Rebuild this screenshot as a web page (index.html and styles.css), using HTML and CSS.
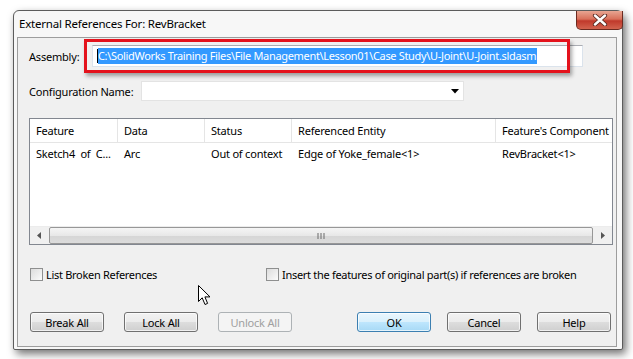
FILE: index.html
```html
<!DOCTYPE html>
<html>
    <head>
        <link rel="stylesheet" href="styles.css">
        <title>External References For: RevBracket</title>
    </head>
    <body>
        <div class="window">
            <div class="titlebar">
                <span class="title">External References For: RevBracket</span>
                <div class="close">
                    <svg width="16" height="12" viewBox="0 0 16 12">
                        <path d="M3 1.5 L13 10.5 M13 1.5 L3 10.5" stroke="#5a2a22" stroke-width="4.2" stroke-linecap="round"/>
                        <path d="M3 1.5 L13 10.5 M13 1.5 L3 10.5" stroke="#ffffff" stroke-width="2.4" stroke-linecap="round"/>
                    </svg>
                </div>
            </div>
            <div class="panel">
                <div class="row assembly">
                    <span class="label">Assembly:</span>
                    <div class="field"><span class="caret"></span><span class="selected">C:\SolidWorks Training Files\File Management\Lesson01\Case Study\U-Joint\U-Joint.sldasm</span></div>
                </div>
                <div class="row config">
                    <span class="label">Configuration Name:</span>
                    <div class="combo">
                        <svg width="8" height="5" viewBox="0 0 8 5"><path d="M0 0 L8 0 L4 4.5 Z" fill="#000"/></svg>
                    </div>
                </div>
                <div class="grid">
                    <div class="grid-line grid-head">
                        <div class="cell">Feature</div>
                        <div class="cell">Data</div>
                        <div class="cell">Status</div>
                        <div class="cell">Referenced Entity</div>
                        <div class="cell">Feature's Component</div>
                    </div>
                    <div class="grid-line grid-row">
                        <div class="cell">Sketch4&nbsp; of&nbsp; C...</div>
                        <div class="cell">Arc</div>
                        <div class="cell">Out of context</div>
                        <div class="cell">Edge of Yoke_female&lt;1&gt;</div>
                        <div class="cell">RevBracket&lt;1&gt;</div>
                    </div>
                    <div class="grid-body"></div>
                    <div class="hscroll">
                        <div class="arrow">
                            <svg width="4" height="7" viewBox="0 0 4 7"><path d="M4 0 L0 3.5 L4 7 Z" fill="#555"/></svg>
                        </div>
                        <div class="thumb">
                            <svg width="8" height="6" viewBox="0 0 8 6"><path d="M1 0 V6 M4 0 V6 M7 0 V6" stroke="#6a6a6a" stroke-width="1"/></svg>
                        </div>
                        <div class="arrow">
                            <svg width="4" height="7" viewBox="0 0 4 7"><path d="M0 0 L4 3.5 L0 7 Z" fill="#555"/></svg>
                        </div>
                    </div>
                </div>
                <div class="checks">
                    <label class="check first"><span class="box"></span>List Broken References</label>
                    <label class="check"><span class="box"></span>Insert the features of original part(s) if references are broken</label>
                </div>
                <div class="buttons">
                    <div class="group left">
                        <button>Break All</button>
                        <button>Lock All</button>
                        <button disabled>Unlock All</button>
                    </div>
                    <div class="group right">
                        <button class="default">OK</button>
                        <button>Cancel</button>
                        <button>Help</button>
                    </div>
                </div>
            </div>
        </div>

        <div class="callout"></div>

        <svg class="pointer" width="14" height="21" viewBox="0 0 14 21">
            <path d="M0.5 0.5 L0.5 16.5 L4.2 12.8 L7 19.5 L9.6 18.4 L6.9 11.9 L12 11.9 Z" fill="#ffffff" stroke="#000" stroke-width="1" stroke-linejoin="round"/>
        </svg>
    </body>
</html>
```

FILE: styles.css
```css
body {
    margin: 0;
    background-color: #ffffff;
    font-family: "Noto Sans", sans-serif;
    font-size: 11px;
    letter-spacing: -0.2px;
    color: #000000;
    width: 633px;
    height: 359px;
    overflow: hidden;
    position: relative;
}
.window {
    margin: 10px 0 0 13px;
    width: 608px;
    height: 338px;
    border: 1px solid #5c5c5c;
    border-radius: 6px 6px 2px 2px;
    background-color: #f7f7f7;
    box-shadow: 3px 4px 9px rgba(0, 0, 0, 0.55);
    display: flex;
    flex-direction: column;
}
.titlebar {
    height: 26px;
    display: flex;
    align-items: flex-start;
    padding-left: 5px;
}
.title {
    font-size: 11.5px;
    margin-top: 5px;
    letter-spacing: -0.2px;
}
.close {
    margin-left: auto;
    margin-right: -1px;
    width: 47px;
    height: 19px;
    border: 1px solid #6b2a20;
    border-top: none;
    border-radius: 0 0 5px 5px;
    background: linear-gradient(to bottom, #e8a592 0%, #d8705a 45%, #c0392b 55%, #d2634e 100%);
    display: flex;
    align-items: center;
    justify-content: center;
    box-sizing: border-box;
}
.panel {
    flex: 1;
    margin: 0 5px 2px 3px;
    border: 1px solid #9d9d9d;
    background-color: #f0f0f0;
    display: flex;
    flex-direction: column;
}
.row {
    display: flex;
    align-items: center;
    padding-left: 11px;
}
.label {
    flex: none;
}
.assembly {
    margin-top: 7px;
    height: 22px;
}
.assembly .label {
    width: 63px;
}
.field {
    width: 491px;
    height: 22px;
    box-sizing: border-box;
    border: 1px solid #dbe3ec;
    border-top-color: #abadb3;
    background-color: #ffffff;
    display: flex;
    align-items: center;
    padding-left: 4px;
}
.caret {
    width: 1px;
    height: 14px;
    background-color: #000;
}
.selected {
    background-color: #3399ff;
    color: #ffffff;
    line-height: 16px;
    padding-right: 1px;
    letter-spacing: -0.33px;
    white-space: nowrap;
}
.config {
    margin-top: 14px;
    height: 20px;
}
.config .label {
    width: 112px;
}
.combo {
    width: 323px;
    height: 20px;
    box-sizing: border-box;
    border: 1px solid #e3e3e3;
    background-color: #ffffff;
    display: flex;
    align-items: center;
    justify-content: flex-end;
    padding-right: 4px;
}
.grid {
    margin: 17px 0 0 11px;
    width: 584px;
    height: 127px;
    box-sizing: border-box;
    border: 1px solid #828790;
    background-color: #ffffff;
    display: flex;
    flex-direction: column;
    overflow: hidden;
}
.grid-line {
    display: grid;
    grid-template-columns: 88px 87px 87px 204px 140px;
    white-space: nowrap;
}
.grid-head {
    height: 23px;
    border-bottom: 1px solid #e5e5e5;
}
.grid-head .cell {
    border-right: 1px solid #e5e5e5;
}
.cell {
    padding-left: 6px;
    display: flex;
    align-items: center;
    overflow: hidden;
}
.grid-row {
    height: 21px;
}
.grid-body {
    flex: 1;
}
.hscroll {
    height: 17px;
    display: flex;
    background-color: #f0f0f0;
    border-top: 1px solid #ececec;
}
.arrow {
    width: 18px;
    display: flex;
    align-items: center;
    justify-content: center;
}
.thumb {
    flex: 1;
    margin: 0 1px;
    border: 1px solid #979797;
    border-radius: 2px;
    background: linear-gradient(to bottom, #f5f5f5 0%, #e8e8e8 50%, #d6d6d6 55%, #dcdcdc 100%);
    display: flex;
    align-items: center;
    justify-content: center;
}
.checks {
    margin-top: 22px;
    display: flex;
    padding-left: 12px;
    height: 15px;
}
.check {
    display: flex;
    align-items: center;
    letter-spacing: -0.3px;
}
.check.first {
    width: 236px;
}
.box {
    width: 11px;
    height: 11px;
    border: 1px solid #8e8f8f;
    background: linear-gradient(to bottom right, #dcdcdc, #fbfbfb);
    margin-right: 3px;
}
.buttons {
    margin-top: 30px;
    display: flex;
    padding: 0 5px 0 12px;
}
.group {
    display: flex;
}
.group.left {
    gap: 20px;
}
.group.right {
    margin-left: auto;
    gap: 16px;
}
button {
    width: 74px;
    height: 20px;
    font-family: "Noto Sans", sans-serif;
    font-size: 11px;
    letter-spacing: -0.2px;
    color: #000;
    padding: 0;
    border: 1px solid #707070;
    border-radius: 3px;
    background: linear-gradient(to bottom, #f2f2f2 0%, #ebebeb 50%, #dddddd 51%, #cfcfcf 100%);
    box-shadow: inset 0 0 0 1px rgba(255, 255, 255, 0.7);
}
button.default {
    border-color: #3c7fb1;
    background: linear-gradient(to bottom, #eaf6fd 0%, #d9f0fc 50%, #bee6fd 51%, #a7d9f5 100%);
}
button:disabled {
    color: #a0a0a0;
    border-color: #adb2b5;
    background: #f4f4f4;
    box-shadow: none;
}
.callout {
    position: absolute;
    left: 84px;
    top: 39px;
    width: 486px;
    height: 34px;
    box-sizing: border-box;
    border: 3px solid #e4121c;
    box-shadow: 2px 3px 4px rgba(0, 0, 0, 0.35);
}
.pointer {
    position: absolute;
    left: 198px;
    top: 285px;
}
```
